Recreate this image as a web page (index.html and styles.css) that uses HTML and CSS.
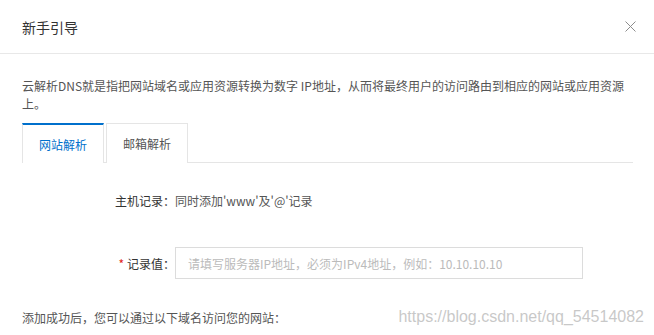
FILE: index.html
```html
<!DOCTYPE html>
<html lang="zh-CN">
<head>
  <meta charset="UTF-8" />
  <meta name="viewport" content="width=device-width, initial-scale=1.0"/>
  <title>新手引导</title>
  <link rel="stylesheet" href="styles.css">
</head>
<body>
  <div class="dialog">
    <div class="dialog-header">
      <h2>新手引导</h2>
      <button class="close-button" aria-label="关闭">
        <svg width="11" height="11" viewBox="0 0 11 11">
          <path d="M0.5 0.5 L10.5 10.5 M10.5 0.5 L0.5 10.5" stroke="#8c8c8c" stroke-width="1" fill="none"/>
        </svg>
      </button>
    </div>

    <div class="dialog-body">
      <p class="intro">云解析DNS就是指把网站域名或应用资源转换为数字 IP地址，从而将最终用户的访问路由到相应的网站或应用资源上。</p>

      <div class="tabs">
        <div class="tab active">网站解析</div>
        <div class="tab">邮箱解析</div>
      </div>

      <div class="form">
        <div class="form-row">
          <label class="form-label">主机记录：</label>
          <span class="form-value">同时添加'www'及'@'记录</span>
        </div>
        <div class="form-row">
          <label class="form-label"><span class="required">*</span>记录值：</label>
          <input class="form-input" type="text" placeholder="请填写服务器IP地址，必须为IPv4地址，例如：10.10.10.10">
        </div>
      </div>

      <p class="after-text">添加成功后，您可以通过以下域名访问您的网站：</p>
    </div>

    <div class="watermark">https://blog.csdn.net/qq_54514082</div>
  </div>
</body>
</html>
```

FILE: styles.css
```css
* {
  box-sizing: border-box;
  margin: 0;
  padding: 0;
}

body {
  font-family: "Noto Sans CJK SC", "Liberation Sans", sans-serif;
  font-size: 12px;
  color: #333;
  background: #fff;
}

.dialog {
  position: relative;
  width: 654px;
  height: 335px;
  overflow: hidden;
}

.dialog-header {
  display: flex;
  align-items: center;
  justify-content: space-between;
  height: 54px;
  padding: 0 18px 0 22px;
  border-bottom: 1px solid #e8e8e8;
}

.dialog-header h2 {
  font-size: 14px;
  font-weight: normal;
  color: #333;
}

.close-button {
  background: none;
  border: none;
  width: 11px;
  height: 11px;
  display: flex;
  cursor: pointer;
}

.dialog-body {
  padding: 23px 21px 0 22px;
}

.intro {
  line-height: 18px;
  color: #555;
}

.tabs {
  display: flex;
  gap: 2px;
  margin-top: 10px;
  border-bottom: 1px solid #e5e5e5;
}

.tab {
  width: 82px;
  height: 40px;
  line-height: 40px;
  text-align: center;
  color: #555;
  border: 1px solid #e5e5e5;
  border-bottom: none;
  margin-bottom: -1px;
  background: #fff;
}

.tab.active {
  color: #0070cc;
  border-top: 2px solid #0070cc;
  line-height: 39px;
}

.form {
  padding-top: 21px;
}

.form-row {
  display: flex;
  align-items: center;
  min-height: 32px;
}

.form-row + .form-row {
  margin-top: 31px;
}

.form-label {
  width: 153px;
  text-align: right;
  color: #333;
}

.required {
  color: #e02020;
  margin-right: 3px;
}

.form-value {
  color: #555;
}

.form-input {
  width: 408px;
  height: 32px;
  border: 1px solid #dcdcdc;
  padding: 0 12px;
  font-family: inherit;
  font-size: 12px;
  color: #333;
  outline: none;
}

.form-input::placeholder {
  color: #bbb;
}

.after-text {
  margin-top: 30px;
  line-height: 18px;
  color: #555;
}

.watermark {
  position: absolute;
  right: 10px;
  bottom: 9px;
  font-family: "Liberation Sans", sans-serif;
  font-size: 16px;
  color: rgba(190, 190, 190, 0.85);
  pointer-events: none;
}
```
